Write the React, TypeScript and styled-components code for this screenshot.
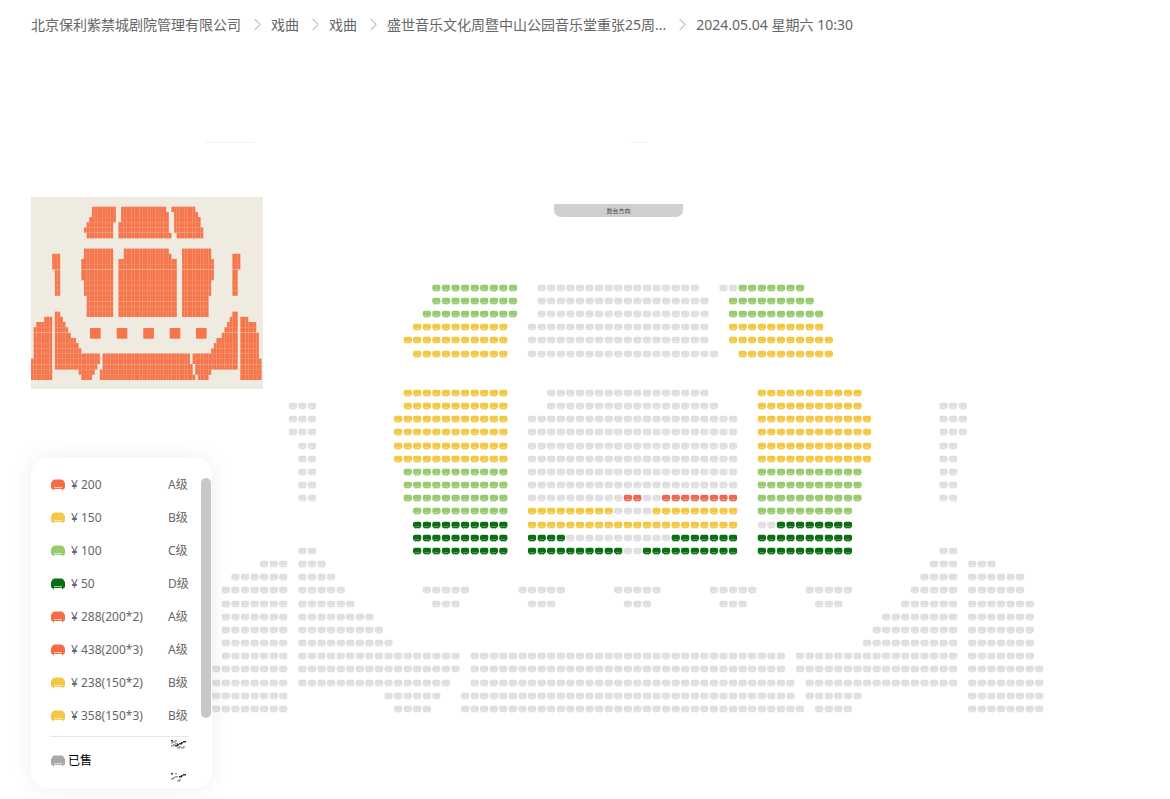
import styled, { createGlobalStyle } from "styled-components";
import { ChevronRight } from "lucide-react";

const GlobalStyle = createGlobalStyle`
  html, body {
    margin: 0;
    padding: 0;
    background: #fff;
    overflow: hidden;
  }

  body {
    font-family: "Noto Sans", "Noto Sans CJK SC", sans-serif;
    color: #666;
  }
`;

const COLOURS: Record<string, string> = {
  g: "#dfdfdf",
  G: "#98ca6e",
  Y: "#f3c844",
  D: "#0b6e12",
  R: "#ea6a54",
};

type Run = [number, number, string];
type Row = [number, Run[]];

// row centre y, then runs of [first column, last column, colour]
const ROWS: Row[] = [
  [288, [[23, 31, "G"], [34, 50, "g"], [53, 54, "g"], [55, 61, "G"]]],
  [301, [[23, 31, "G"], [34, 51, "g"], [54, 62, "G"]]],
  [314, [[22, 31, "G"], [34, 51, "g"], [54, 63, "G"]]],
  [327, [[21, 30, "Y"], [33, 51, "g"], [54, 63, "Y"]]],
  [340, [[20, 30, "Y"], [33, 51, "g"], [54, 64, "Y"]]],
  [354, [[21, 30, "Y"], [33, 52, "g"], [55, 64, "Y"]]],
  [393, [[20, 30, "Y"], [35, 51, "g"], [57, 67, "Y"]]],
  [406, [[8, 10, "g"], [20, 30, "Y"], [35, 52, "g"], [57, 67, "Y"], [76, 78, "g"]]],
  [419, [[8, 10, "g"], [19, 30, "Y"], [33, 54, "g"], [57, 68, "Y"], [76, 78, "g"]]],
  [432, [[8, 10, "g"], [19, 30, "Y"], [33, 54, "g"], [57, 68, "Y"], [76, 78, "g"]]],
  [446, [[9, 10, "g"], [19, 30, "Y"], [33, 54, "g"], [57, 68, "Y"], [76, 77, "g"]]],
  [459, [[9, 10, "g"], [19, 30, "Y"], [33, 54, "g"], [57, 68, "Y"], [76, 77, "g"]]],
  [472, [[9, 10, "g"], [20, 30, "G"], [33, 54, "g"], [57, 67, "G"], [76, 77, "g"]]],
  [485, [[9, 10, "g"], [20, 30, "G"], [33, 54, "g"], [57, 67, "G"], [76, 77, "g"]]],
  [498, [[9, 10, "g"], [20, 30, "G"], [33, 42, "g"], [43, 44, "R"], [45, 46, "g"], [47, 54, "R"], [57, 67, "G"], [76, 77, "g"]]],
  [511, [[21, 30, "G"], [33, 41, "Y"], [42, 45, "g"], [46, 54, "Y"], [57, 66, "G"]]],
  [525, [[21, 30, "D"], [33, 54, "Y"], [57, 58, "g"], [59, 66, "D"]]],
  [538, [[21, 30, "D"], [33, 36, "D"], [37, 47, "g"], [48, 54, "D"], [57, 66, "D"]]],
  [551, [[9, 10, "g"], [21, 30, "D"], [33, 42, "D"], [43, 44, "g"], [45, 54, "D"], [57, 66, "D"], [76, 77, "g"]]],
  [564, [[5, 7, "g"], [9, 11, "g"], [75, 77, "g"], [79, 81, "g"]]],
  [577, [[2, 7, "g"], [9, 12, "g"], [74, 77, "g"], [79, 84, "g"]]],
  [590, [[1, 7, "g"], [9, 13, "g"], [22, 26, "g"], [32, 36, "g"], [42, 46, "g"], [52, 56, "g"], [62, 66, "g"], [73, 77, "g"], [79, 84, "g"]]],
  [604, [[1, 7, "g"], [9, 14, "g"], [23, 25, "g"], [33, 35, "g"], [43, 45, "g"], [53, 55, "g"], [63, 65, "g"], [72, 77, "g"], [79, 85, "g"]]],
  [617, [[1, 7, "g"], [9, 16, "g"], [70, 77, "g"], [79, 85, "g"]]],
  [630, [[1, 7, "g"], [9, 17, "g"], [69, 77, "g"], [79, 85, "g"]]],
  [643, [[1, 7, "g"], [9, 18, "g"], [68, 77, "g"], [79, 85, "g"]]],
  [656, [[1, 7, "g"], [9, 25, "g"], [27, 59, "g"], [61, 77, "g"], [79, 85, "g"]]],
  [669, [[0, 7, "g"], [9, 25, "g"], [27, 59, "g"], [61, 77, "g"], [79, 86, "g"]]],
  [683, [[0, 7, "g"], [9, 24, "g"], [27, 60, "g"], [62, 77, "g"], [79, 86, "g"]]],
  [696, [[0, 7, "g"], [18, 23, "g"], [26, 60, "g"], [62, 67, "g"], [79, 86, "g"]]],
  [709, [[0, 7, "g"], [19, 22, "g"], [26, 61, "g"], [63, 66, "g"], [79, 86, "g"]]],
];

const SEAT_PITCH = 9.57;
const CHART_TOP = 284;

const seats = ROWS.flatMap(([y, runs]) =>
  runs.flatMap(([first, last, colour]) =>
    Array.from({ length: last - first + 1 }, (_, i) => ({
      col: first + i,
      y,
      colour,
    })),
  ),
);

// the thumbnail shows the five small blocks as plain squares
const isSmallBlock = (col: number, y: number) =>
  (y === 590 || y === 604) && col >= 22 && col <= 66;

const MINI_SQUARES = [59, 85.7, 112.3, 138.7, 165];

const PRICES = [
  { price: "¥ 200", level: "A级", colour: "#f56b45" },
  { price: "¥ 150", level: "B级", colour: "#f3c844" },
  { price: "¥ 100", level: "C级", colour: "#98ca6e" },
  { price: "¥ 50", level: "D级", colour: "#0b6e12" },
  { price: "¥ 288(200*2)", level: "A级", colour: "#f56b45" },
  { price: "¥ 438(200*3)", level: "A级", colour: "#f56b45" },
  { price: "¥ 238(150*2)", level: "B级", colour: "#f3c844" },
  { price: "¥ 358(150*3)", level: "B级", colour: "#f3c844" },
];

const CRUMBS = [
  "北京保利紫禁城剧院管理有限公司",
  "戏曲",
  "戏曲",
  "盛世音乐文化周暨中山公园音乐堂重张25周...",
  "2024.05.04 星期六 10:30",
];

const Page = styled.div`
  width: 1170px;
  height: 799px;
  overflow: hidden;
`;

const Breadcrumb = styled.nav`
  display: flex;
  align-items: center;
  height: 49px;
  padding-left: 31px;
  font-size: 14px;
  line-height: 20px;
  color: #666;
  white-space: nowrap;
`;

const Crumb = styled.span`
  display: flex;
  align-items: center;
`;

const CrumbArrow = styled(ChevronRight)`
  width: 21px;
  height: 21px;
  margin: 0 3.5px 0 5.5px;
  color: #999;
`;

const MarkRow = styled.div`
  display: flex;
  gap: 375px;
  height: 1px;
  margin-top: 93px;
  padding-left: 205px;
`;

const FaintMark = styled.div<{ $width: number }>`
  width: ${(props) => props.$width}px;
  background: #f2f2f2;
`;

const Hall = styled.main`
  display: flex;
  padding: 54px 0 0 31px;
`;

const Sidebar = styled.div`
  display: flex;
  flex-direction: column;
  gap: 69px;
  flex: none;
  width: 232px;
  position: relative;
  z-index: 1;
`;

const Minimap = styled.svg`
  display: block;
  background: #efebe0;
`;

const MiniSeats = styled.g`
  filter: blur(0.3px);
`;

const SeatArea = styled.div`
  flex: none;
  margin-left: -51px;
`;

const Stage = styled.div`
  display: flex;
  align-items: center;
  justify-content: center;
  width: 129px;
  height: 13px;
  margin: 7px 0 0 342px;
  background: #cfcfcf;
  border-radius: 0 0 7px 7px;
  font-size: 6px;
  color: #444;
`;

const SeatChart = styled.svg`
  display: block;
  margin-top: 67px;
  filter: blur(0.3px);
`;

const Legend = styled.aside`
  display: flex;
  gap: 13px;
  width: 181px;
  height: 330px;
  box-sizing: border-box;
  padding: 10px 1px 0 20px;
  background: #fff;
  border-radius: 16px;
  box-shadow: 0 0 22px rgba(0, 0, 0, 0.07);
`;

const LegendList = styled.div`
  flex: none;
  width: 137px;
`;

const ScrollThumb = styled.div`
  flex: none;
  width: 10px;
  height: 240px;
  margin-top: 10px;
  background: #c8c8c8;
  border-radius: 5px;
`;

const PriceRow = styled.div`
  display: flex;
  align-items: center;
  justify-content: space-between;
  height: 33px;
  font-size: 12px;
  line-height: 16px;
  color: #666;
`;

const PriceInfo = styled.span`
  display: flex;
  align-items: center;
  gap: 6px;
`;

const Level = styled.span`
  width: 20px;
  white-space: nowrap;
`;

const SeatIcon = styled.svg`
  display: block;
  width: 14px;
  height: 12px;
  flex: none;
`;

const Divider = styled.div`
  height: 1px;
  margin-top: 4px;
  background: #e5e5e5;
`;

const SoldRow = styled.div`
  display: flex;
  align-items: center;
  justify-content: space-between;
  height: 48px;
  font-size: 12px;
  line-height: 16px;
  color: #000;
`;

const SoldLabel = styled.span`
  display: flex;
  align-items: center;
  gap: 3px;
`;

const SpeckColumn = styled.div`
  display: flex;
  flex-direction: column;
  gap: 24px;
  padding-right: 2px;
`;

const Speck = styled.svg`
  display: block;
  filter: blur(0.7px);
`;

const SeatShape = ({ colour }: { colour: string }) => (
  <SeatIcon viewBox="0 0 14 12">
    <path
      d="M3.6 0.4h6.8a2.8 2.8 0 0 1 2.7 2.6c.6.2.9.8.9 1.4v4.2c0 .9-.7 1.5-1.5 1.5h-.3v1.2h-1.2v-1.2H3v1.2H1.8v-1.2h-.3C.7 9.9 0 9.3 0 8.4V4.4c0-.6.3-1.2.9-1.4A2.8 2.8 0 0 1 3.6.4z"
      fill={colour}
    />
    <rect x="3" y="8.2" width="8" height="0.9" fill="#fff" opacity="0.75" />
  </SeatIcon>
);

const Speckle = ({ count }: { count: number }) => (
  <Speck width="15" height="9" viewBox="0 0 15 9">
    {Array.from({ length: count }, (_, i) => (
      <rect
        key={i}
        x={(i * 4) % 14}
        y={(i * 3) % 8}
        width={2 + (i % 2)}
        height="1.5"
        fill={i % 3 === 0 ? "#333" : "#999"}
      />
    ))}
  </Speck>
);

const App = () => {
  return (
    <Page>
      <GlobalStyle />
      <Breadcrumb>
        {CRUMBS.map((crumb, i) => (
          <Crumb key={i}>
            {i > 0 && <CrumbArrow strokeWidth={1.1} />}
            {crumb}
          </Crumb>
        ))}
      </Breadcrumb>
      <MarkRow>
        <FaintMark $width={50} />
        <FaintMark $width={18} />
      </MarkRow>
      <Hall>
        <Sidebar>
          <Minimap width="232" height="192" viewBox="0 0 232 192">
            <MiniSeats fill="#f6754b">
              {seats
                .filter((seat) => !isSmallBlock(seat.col, seat.y))
                .map((seat) => (
                  <rect
                    key={`${seat.y}-${seat.col}`}
                    x={seat.col * 2.65}
                    y={9.7 + (seat.y - 288) * 0.399}
                    width="2.65"
                    height="5.3"
                  />
                ))}
              {MINI_SQUARES.map((x) => (
                <rect key={x} x={x} y="131" width="10.6" height="10.7" />
              ))}
            </MiniSeats>
          </Minimap>
          <Legend>
            <LegendList>
              {PRICES.map((item) => (
                <PriceRow key={item.price}>
                  <PriceInfo>
                    <SeatShape colour={item.colour} />
                    {item.price}
                  </PriceInfo>
                  <Level>{item.level}</Level>
                </PriceRow>
              ))}
              <Divider />
              <SoldRow>
                <SoldLabel>
                  <SeatShape colour="#a9a9a9" />
                  已售
                </SoldLabel>
                <SpeckColumn>
                  <Speckle count={16} />
                  <Speckle count={10} />
                </SpeckColumn>
              </SoldRow>
            </LegendList>
            <ScrollThumb />
          </Legend>
        </Sidebar>
        <SeatArea>
          <Stage>舞台方向</Stage>
          <SeatChart width="852" height="432" viewBox="0 0 852 432">
            <defs>
              <symbol id="seat" viewBox="0 0 86 80" width="8.6" height="8">
                <path d="M28 0h30a28 30 0 0 1 28 30v8a28 28 0 0 1-22 27v6h-6v-5H28v5h-6v-6A28 28 0 0 1 0 38v-8A28 30 0 0 1 28 0z" />
                <rect x="20" y="48" width="46" height="6" fill="#fff" opacity="0.5" />
              </symbol>
            </defs>
            {seats.map((seat) => (
              <use
                key={`${seat.y}-${seat.col}`}
                href="#seat"
                x={seat.col * SEAT_PITCH}
                y={seat.y - CHART_TOP - 3.4}
                fill={COLOURS[seat.colour]}
              />
            ))}
          </SeatChart>
        </SeatArea>
      </Hall>
    </Page>
  );
};

export default App;
